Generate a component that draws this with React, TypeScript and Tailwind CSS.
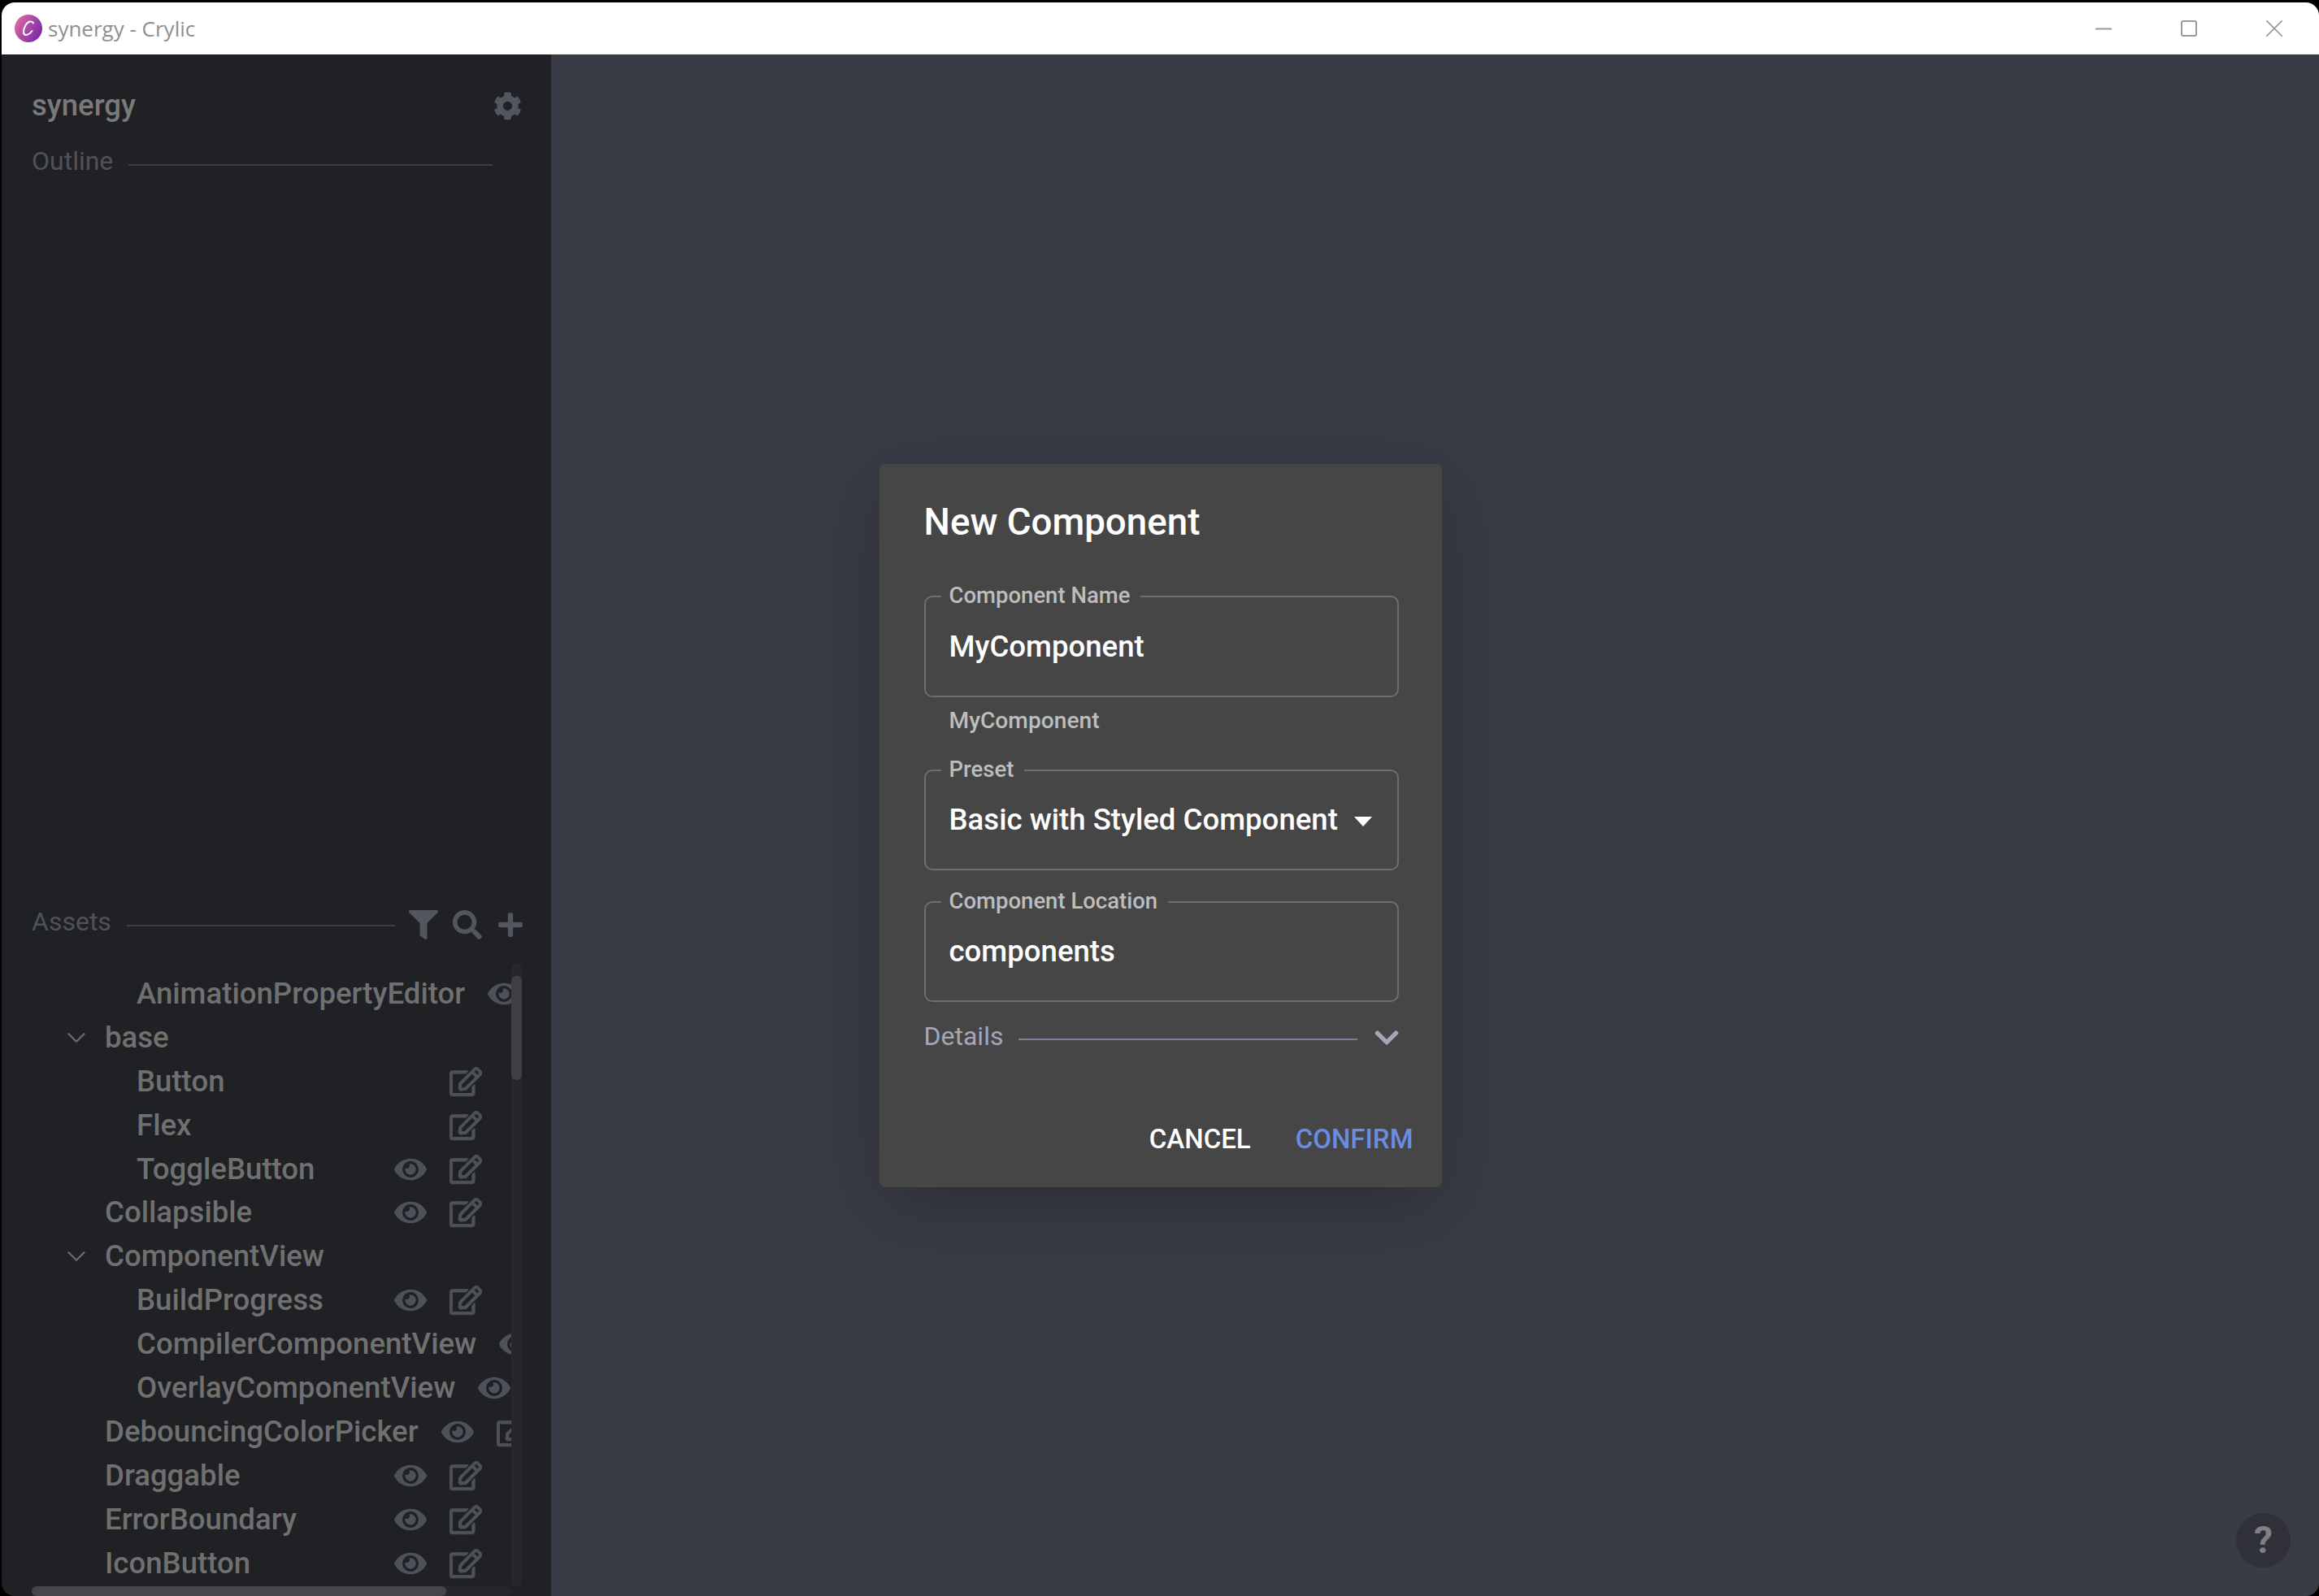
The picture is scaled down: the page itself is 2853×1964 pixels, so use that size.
import React from "react";
import { ChevronDown } from "lucide-react";
import {
  FaChevronDown,
  FaCog,
  FaEye,
  FaFilter,
  FaPlus,
  FaRegEdit,
  FaSearch,
} from "react-icons/fa";

type Asset = {
  name: string;
  depth: 1 | 2;
  folder?: boolean;
  eye?: boolean;
  edit?: boolean;
};

const assets: Asset[] = [
  { name: "AnimationPropertyEditor", depth: 2, eye: true, edit: true },
  { name: "base", depth: 1, folder: true },
  { name: "Button", depth: 2, edit: true },
  { name: "Flex", depth: 2, edit: true },
  { name: "ToggleButton", depth: 2, eye: true, edit: true },
  { name: "Collapsible", depth: 1, eye: true, edit: true },
  { name: "ComponentView", depth: 1, folder: true },
  { name: "BuildProgress", depth: 2, eye: true, edit: true },
  { name: "CompilerComponentView", depth: 2, eye: true, edit: true },
  { name: "OverlayComponentView", depth: 2, eye: true, edit: true },
  { name: "DebouncingColorPicker", depth: 1, eye: true, edit: true },
  { name: "Draggable", depth: 1, eye: true, edit: true },
  { name: "ErrorBoundary", depth: 1, eye: true, edit: true },
  { name: "IconButton", depth: 1, eye: true, edit: true },
];

const TitleBar = () => (
  <div className="h-[64px] shrink-0 bg-white flex items-center pl-[16px] pr-[3px]">
    <svg width="34" height="34" viewBox="0 0 34 34" className="shrink-0">
      <defs>
        <linearGradient id="logo" x1="0" y1="0" x2="1" y2="0.6">
          <stop offset="0" stopColor="#e872a2" />
          <stop offset="1" stopColor="#7f2aa8" />
        </linearGradient>
      </defs>
      <circle cx="17" cy="17" r="17" fill="url(#logo)" />
      <path
        d="M23 10.5C21.5 7 16.5 8 13.5 13C10.5 18 10 24.5 13.5 25C16.5 25.4 19.5 22.5 21.5 20"
        fill="none"
        stroke="#fff"
        strokeWidth="2"
        strokeLinecap="round"
      />
    </svg>
    <span className="ml-[7px] font-['Open_Sans',sans-serif] text-[26px] text-[#8f8f8f]">
      synergy - Crylic
    </span>
    <div className="ml-auto flex text-[#9a9a9a]">
      <div className="w-[105px] h-[64px] flex items-center justify-center">
        <svg width="20" height="20" viewBox="0 0 20 20">
          <path d="M0 10.5H20" stroke="currentColor" strokeWidth="2" />
        </svg>
      </div>
      <div className="w-[105px] h-[64px] flex items-center justify-center">
        <svg width="20" height="20" viewBox="0 0 20 20">
          <rect x="1" y="1" width="18" height="18" rx="2" fill="none" stroke="currentColor" strokeWidth="2" />
        </svg>
      </div>
      <div className="w-[105px] h-[64px] flex items-center justify-center">
        <svg width="20" height="20" viewBox="0 0 20 20">
          <path d="M0 0L20 20M20 0L0 20" stroke="currentColor" strokeWidth="1.6" />
        </svg>
      </div>
    </div>
  </div>
);

const AssetRow = ({ asset }: { asset: Asset }) => (
  <div
    className={`flex items-center h-[53.9px] w-max min-w-[554px] ${
      asset.folder ? "pl-[36px]" : asset.depth === 1 ? "pl-[90px]" : "pl-[129px]"
    }`}
  >
    {asset.folder && (
      <ChevronDown size={38} strokeWidth={1.5} className="shrink-0 mr-[16px] text-[#6b6b6b]" />
    )}
    <span className="text-[36.6px] leading-[54px] font-medium text-[#707070] whitespace-nowrap">
      {asset.name}
    </span>
    <div className="flex-1" />
    {asset.eye && <FaEye size={40} className="ml-[28px] shrink-0 text-[#4e5159]" />}
    {asset.edit && (
      <FaRegEdit size={40} className="ml-[28px] shrink-0 text-[#4e5159] stroke-[14]" />
    )}
  </div>
);

const Sidebar = () => (
  <div className="w-[676px] shrink-0 h-full bg-[#1f2125] flex flex-col pl-[37px]">
    <div className="flex-1 min-h-0">
      <div className="flex items-center justify-between pt-[45px] pr-[36px]">
        <span className="text-[36.6px] leading-[36px] font-medium text-[#7a7a7a]">synergy</span>
        <FaCog size={35} className="text-[#53565e]" />
      </div>
      <div className="flex items-center h-[40px] mt-[30px] pr-[72px]">
        <span className="text-[32px] text-[#50525b]">Outline</span>
        <div className="flex-1 h-[2px] bg-[#3c3f48] ml-[19px] mt-[10px]" />
      </div>
    </div>
    <div className="h-[850px] shrink-0 flex flex-col">
      <div className="flex items-center h-[40px]">
        <span className="text-[32px] text-[#50525b]">Assets</span>
        <div className="w-[330px] h-[2px] bg-[#3c3f48] ml-[19px] mt-[10px]" />
        <FaFilter size={36} className="ml-[17px] mt-[8px] text-[#53565e]" />
        <FaSearch size={36} className="ml-[18px] mt-[8px] text-[#53565e]" />
        <FaPlus size={34} className="ml-[18px] mt-[8px] text-[#53565e]" />
      </div>
      <div className="mt-[31px] flex-1 min-h-0 grid grid-cols-[590px_13px] grid-rows-[1fr_12px]">
        <div className="overflow-hidden pt-[11px]">
          {assets.map((asset) => (
            <AssetRow key={asset.name} asset={asset} />
          ))}
        </div>
        <div className="bg-[#25272b] rounded-[6px] pt-[16px]">
          <div className="h-[128px] bg-[#3e4045] rounded-[6px]" />
        </div>
        <div className="bg-[#25272b] rounded-[6px]">
          <div className="w-[510px] h-full bg-[#44464b] rounded-[6px]" />
        </div>
      </div>
    </div>
  </div>
);

const Field = ({
  label,
  value,
  select,
  className,
}: {
  label: string;
  value: string;
  select?: boolean;
  className?: string;
}) => (
  <div
    className={`relative rounded-[10px] border-2 border-[#6e6e6e] flex items-center pl-[29px] pr-[30px] ${className}`}
  >
    <span className="absolute -top-[18px] left-[19px] pl-[10px] pr-[13px] bg-[#464646] text-[27.5px] leading-[32px] font-medium text-[#bdbdbd]">
      {label}
    </span>
    <span className="mt-[1px] text-[36.6px] font-medium text-white whitespace-nowrap">{value}</span>
    {select && (
      <svg width="22" height="12" viewBox="0 0 22 12" className="ml-auto mt-[3px] mr-[1px]">
        <path d="M0 0H22L11 12Z" fill="#fff" />
      </svg>
    )}
  </div>
);

const Dialog = () => (
  <div className="w-[692px] bg-[#464646] rounded-[8px] pt-[42px] pb-[39px] pl-[55px] pr-[53px] shadow-[0_24px_90px_rgba(0,0,0,0.22)]">
    <h2 className="text-[45.7px] leading-[60px] font-medium text-white">New Component</h2>
    <Field label="Component Name" value="MyComponent" className="h-[125px] mt-[60px]" />
    <p className="mt-[14px] ml-[31px] text-[28.2px] leading-[30px] font-medium text-[#bdbdbd]">
      MyComponent
    </p>
    <Field
      label="Preset"
      value="Basic with Styled Component"
      select
      className="h-[124px] mt-[45px]"
    />
    <Field label="Component Location" value="components" className="h-[124px] mt-[38px]" />
    <div className="flex items-center h-[30px] mt-[27px]">
      <span className="text-[32px] leading-[30px] text-[#a4a7b8]">Details</span>
      <div className="flex-1 h-[2px] bg-[#7d8095] mx-[19px] mt-[8px]" />
      <FaChevronDown size={34} className="text-[#a4a7b8] -mr-[2px] mt-[4px]" />
    </div>
    <div className="flex justify-end items-center gap-[55px] h-[40px] mt-[92px] -mr-[18px]">
      <span className="text-[33px] font-medium text-white">CANCEL</span>
      <span className="text-[33px] font-medium text-[#6c8ce2]">CONFIRM</span>
    </div>
  </div>
);

const App = () => {
  return (
    <div className="h-screen w-full bg-black pt-[3px] pl-[2px] font-['Roboto',sans-serif]">
      <div className="h-full rounded-[16px] overflow-hidden flex flex-col">
        <TitleBar />
        <div className="relative flex-1 min-h-0 flex">
          <Sidebar />
          <div className="flex-1 bg-[#393b46]" />
          <div className="absolute inset-0 pt-[1px] flex items-center justify-center">
            <Dialog />
          </div>
          <div className="absolute right-[35px] bottom-[35px] w-[67px] h-[67px] rounded-full bg-[#2f3039] flex items-center justify-center text-[46px] font-bold text-[#808080]">
            ?
          </div>
        </div>
      </div>
    </div>
  );
};

export default App;
